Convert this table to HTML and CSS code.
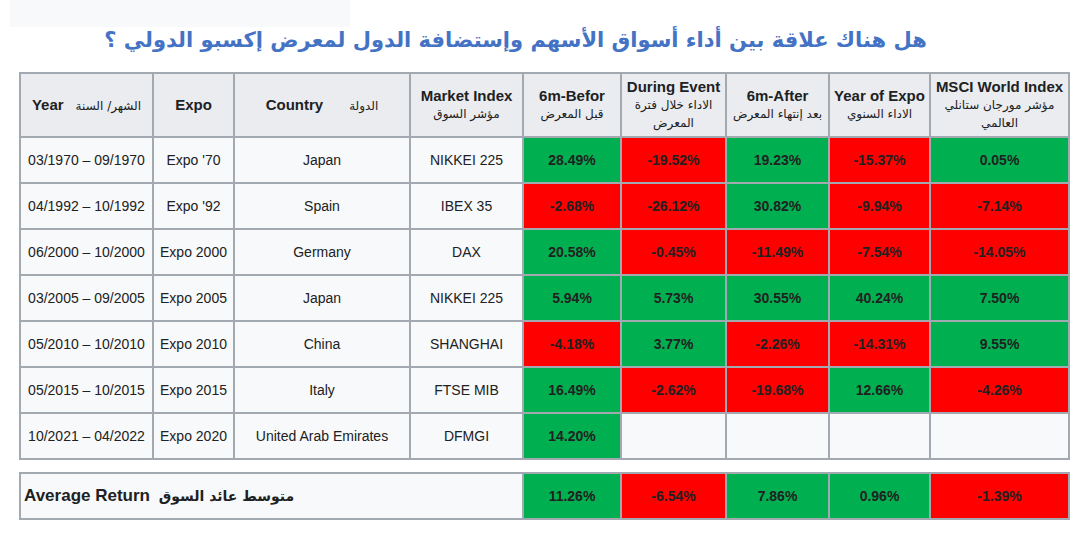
FILE: index.html
```html
<!DOCTYPE html>
<html lang="ar">
<head>
<meta charset="utf-8">
<title>Expo</title>
<link rel="stylesheet" href="styles.css">
</head>
<body>
<div class="topbar"></div>
<h1 class="title" dir="rtl">هل هناك علاقة بين أداء أسواق الأسهم وإستضافة الدول لمعرض إكسبو الدولي ؟</h1>
<div class="wrap">
<table class="grid">
<colgroup>
<col class="c1"><col class="c2"><col class="c3"><col class="c4"><col class="c5"><col class="c6"><col class="c7"><col class="c8"><col class="c9">
</colgroup>
<thead>
<tr>
<th><span class="en">Year</span><span class="ar ar-gap">الشهر/ السنة</span></th>
<th><span class="en">Expo</span></th>
<th><span class="en">Country</span><span class="ar ar-gap2">الدولة</span></th>
<th><span class="en">Market Index</span><br><span class="ar">مؤشر السوق</span></th>
<th><span class="en">6m-Befor</span><br><span class="ar">قبل المعرض</span></th>
<th><span class="en">During Event</span><br><span class="ar">الاداء خلال فترة المعرض</span></th>
<th><span class="en">6m-After</span><br><span class="ar">بعد إنتهاء المعرض</span></th>
<th><span class="en">Year of Expo</span><br><span class="ar">الاداء السنوي</span></th>
<th><span class="en">MSCI World Index</span><br><span class="ar">مؤشر مورجان ستانلي العالمي</span></th>
</tr>
</thead>
<tbody>
<tr><td>03/1970 – 09/1970</td><td>Expo '70</td><td>Japan</td><td>NIKKEI 225</td><td class="g">28.49%</td><td class="r">-19.52%</td><td class="g">19.23%</td><td class="r">-15.37%</td><td class="g">0.05%</td></tr>
<tr><td>04/1992 – 10/1992</td><td>Expo '92</td><td>Spain</td><td>IBEX 35</td><td class="r">-2.68%</td><td class="r">-26.12%</td><td class="g">30.82%</td><td class="r">-9.94%</td><td class="r">-7.14%</td></tr>
<tr><td>06/2000 – 10/2000</td><td>Expo 2000</td><td>Germany</td><td>DAX</td><td class="g">20.58%</td><td class="r">-0.45%</td><td class="r">-11.49%</td><td class="r">-7.54%</td><td class="r">-14.05%</td></tr>
<tr><td>03/2005 – 09/2005</td><td>Expo 2005</td><td>Japan</td><td>NIKKEI 225</td><td class="g">5.94%</td><td class="g">5.73%</td><td class="g">30.55%</td><td class="g">40.24%</td><td class="g">7.50%</td></tr>
<tr><td>05/2010 – 10/2010</td><td>Expo 2010</td><td>China</td><td>SHANGHAI</td><td class="r">-4.18%</td><td class="g">3.77%</td><td class="r">-2.26%</td><td class="r">-14.31%</td><td class="g">9.55%</td></tr>
<tr><td>05/2015 – 10/2015</td><td>Expo 2015</td><td>Italy</td><td>FTSE MIB</td><td class="g">16.49%</td><td class="r">-2.62%</td><td class="r">-19.68%</td><td class="g">12.66%</td><td class="r">-4.26%</td></tr>
<tr><td>10/2021 – 04/2022</td><td>Expo 2020</td><td>United Arab Emirates</td><td>DFMGI</td><td class="g">14.20%</td><td></td><td></td><td></td><td></td></tr>
</tbody>
</table>
<table class="grid foot">
<colgroup>
<col class="c1"><col class="c2"><col class="c3"><col class="c4"><col class="c5"><col class="c6"><col class="c7"><col class="c8"><col class="c9">
</colgroup>
<tbody>
<tr><td colspan="4" class="avg">Average Return <span class="avg-ar">متوسط عائد السوق</span></td><td class="g">11.26%</td><td class="r">-6.54%</td><td class="g">7.86%</td><td class="g">0.96%</td><td class="r">-1.39%</td></tr>
</tbody>
</table>
</div>
</body>
</html>
```
FILE: styles.css
```css
html, body {
  margin: 0;
  padding: 0;
  background: #ffffff;
}
body {
  font-family: "Liberation Sans", "DejaVu Sans", sans-serif;
  color: #202122;
  font-size: 14px;
}
.topbar {
  width: 340px;
  height: 27px;
  margin-left: 10px;
  background: #f8f9fa;
}
.title {
  margin: 0;
  padding: 0 52px 0 0;
  height: 45px;
  line-height: 26px;
  font-size: 21px;
  font-weight: bold;
  color: #4472c4;
  text-align: center;
  white-space: nowrap;
  font-family: "DejaVu Sans", sans-serif;
}
.wrap {
  padding-left: 19px;
}
.grid {
  border-collapse: collapse;
  table-layout: fixed;
  width: 1051px;
  border: 2px solid #a2a9b1;
}
.grid th, .grid td {
  border: 2px solid #a2a9b1;
  text-align: center;
  vertical-align: middle;
  padding: 0 3px;
  overflow: hidden;
}
.grid th {
  background: #eaecf0;
  height: 62px;
  font-weight: bold;
  line-height: 17px;
}
.grid th .en {
  font-size: 15px;
}
.grid td {
  background: #f8f9fa;
  height: 44px;
}
.c1 { width: 133px; }
.c2 { width: 81px; }
.c3 { width: 176px; }
.c4 { width: 113px; }
.c5 { width: 98px; }
.c6 { width: 105px; }
.c7 { width: 103px; }
.c8 { width: 101px; }
.c9 { width: 139px; }
.ar {
  font-family: "DejaVu Sans", sans-serif;
  font-weight: normal;
  font-size: 12px;
}
.ar-gap { margin-left: 12px; }
.ar-gap2 { margin-left: 26px; }
.grid td.g {
  background: #00b050;
  font-weight: bold;
}
.grid td.r {
  background: #ff0000;
  font-weight: bold;
}
.foot {
  margin-top: 12px;
}
.grid td.avg {
  text-align: left;
  font-weight: bold;
  font-size: 17px;
  padding-left: 3px;
}
.avg-ar {
  font-family: "DejaVu Sans", sans-serif;
  font-size: 14px;
  margin-left: 4px;
}
```
